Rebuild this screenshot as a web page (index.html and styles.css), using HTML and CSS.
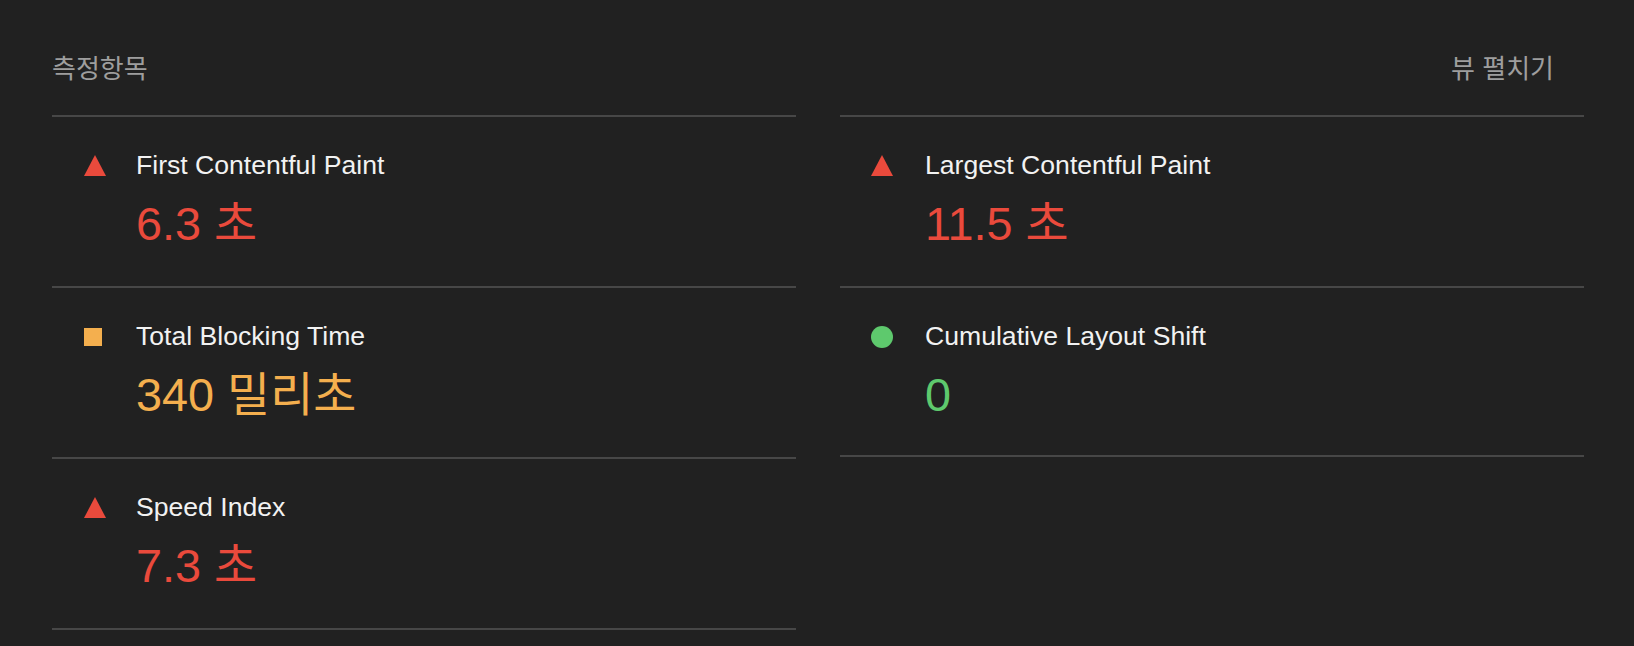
FILE: index.html
```html
<!DOCTYPE html>
<html lang="ko">
<head>
<meta charset="utf-8">
<title>측정항목</title>
<link rel="stylesheet" href="styles.css">
</head>
<body>
<div class="report">
  <div class="header">
    <div class="header-title">측정항목</div>
    <div class="header-toggle">뷰 펼치기</div>
  </div>
  <div class="columns">
    <div class="col">
      <div class="metric">
        <div class="icon"><svg class="tri" width="22" height="21" viewBox="0 0 22 21"><polygon points="11,0 22,21 0,21" fill="#ea4a3c"/></svg></div>
        <div class="title">First Contentful Paint</div>
        <div class="value fail">6.3 초</div>
      </div>
      <div class="metric">
        <div class="icon"><span class="square"></span></div>
        <div class="title">Total Blocking Time</div>
        <div class="value average">340 밀리초</div>
      </div>
      <div class="metric">
        <div class="icon"><svg class="tri" width="22" height="21" viewBox="0 0 22 21"><polygon points="11,0 22,21 0,21" fill="#ea4a3c"/></svg></div>
        <div class="title">Speed Index</div>
        <div class="value fail">7.3 초</div>
      </div>
    </div>
    <div class="col col-right">
      <div class="metric">
        <div class="icon"><svg class="tri" width="22" height="21" viewBox="0 0 22 21"><polygon points="11,0 22,21 0,21" fill="#ea4a3c"/></svg></div>
        <div class="title">Largest Contentful Paint</div>
        <div class="value fail">11.5 초</div>
      </div>
      <div class="metric metric-short">
        <div class="icon"><span class="circle"></span></div>
        <div class="title">Cumulative Layout Shift</div>
        <div class="value pass">0</div>
      </div>
    </div>
  </div>
</div>
</body>
</html>
```
FILE: styles.css
```css
html, body {
  margin: 0;
  padding: 0;
  background: #212121;
}
body {
  font-family: "Liberation Sans", "Noto Sans CJK KR", sans-serif;
  color: #eeeeee;
}
.report {
  padding: 53px 50px 0 52px;
}
.header {
  display: flex;
  justify-content: space-between;
  align-items: center;
  font-size: 26px;
  line-height: 32px;
  color: #9e9e9e;
  padding-bottom: 30px;
}
.header-toggle {
  padding-right: 30px;
}
.columns {
  display: grid;
  grid-template-columns: 1fr 1fr;
  column-gap: 44px;
  align-items: start;
}
.col {
  border-top: 2px solid #474747;
}
.metric {
  display: grid;
  grid-template-columns: 52px 1fr;
  padding: 29px 0 34px 32px;
  border-bottom: 2px solid #474747;
}
.col-right .metric {
  padding-left: 31px;
  grid-template-columns: 54px 1fr;
}
.col-right .metric-short {
  padding-bottom: 32px;
}
.icon {
  grid-column: 1;
  grid-row: 1;
  height: 39px;
  display: flex;
  align-items: center;
}
.tri {
  display: block;
}
.square {
  display: block;
  width: 18px;
  height: 18px;
  background: #f4af4e;
}
.circle {
  display: block;
  width: 22px;
  height: 22px;
  border-radius: 50%;
  background: #5ec96d;
}
.title {
  grid-column: 2;
  grid-row: 1;
  font-size: 26.6px;
  line-height: 39px;
  color: #f2f2f2;
}
.value {
  grid-column: 2;
  grid-row: 2;
  font-size: 46.8px;
  line-height: 56px;
  margin-top: 11px;
}
.fail { color: #ea4a3c; }
.average { color: #f4af4e; }
.pass { color: #5ec96d; }
```
